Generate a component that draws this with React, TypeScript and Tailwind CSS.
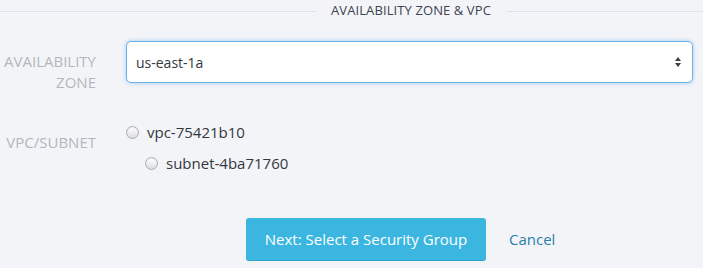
import React from "react";

function Radio({ label }: { label: string }) {
  return (
    <label className="flex items-center gap-2 cursor-pointer">
      <span className="w-[13px] h-[13px] rounded-full border border-[#a9abae] bg-gradient-to-b from-[#ffffff] to-[#dcdde0] shadow-[inset_0_1px_1px_rgba(0,0,0,0.05)]" />
      <span className="text-[15px] leading-[20px] text-[#333840]">{label}</span>
    </label>
  );
}

export default function App() {
  return (
    <div className="w-[703px] h-[268px] bg-[#f3f4f8] font-['Open_Sans',sans-serif] overflow-hidden">
      <div className="flex items-center h-[22px]">
        <div className="w-[316px] h-px bg-[#dfe1ea]" />
        <span className="ml-[15px] mr-[16px] text-[13px] tracking-[0.1px] text-[#3c4450]">AVAILABILITY ZONE &amp; VPC</span>
        <div className="flex-1 h-px bg-[#dfe1ea]" />
      </div>

      <div className="flex mt-[19px]">
        <div className="w-[96px] pt-[10px] text-right text-[15px] leading-[21px] text-[#b3b7bb]">
          AVAILABILITY
          <br />
          ZONE
        </div>
        <div className="ml-[30px] w-[567px] h-[42px] flex items-center justify-between px-[9px] bg-white border border-[#6aafe6] rounded-[5px] shadow-[0_0_4px_rgba(102,175,233,0.6)]">
          <span className="text-[14px] text-[#333840]">us-east-1a</span>
          <svg width="8" height="12" viewBox="0 0 8 12" className="mr-[1px]">
            <path d="M4 1 L7 5 L1 5 Z" fill="#3a3f47" />
            <path d="M4 11 L7 7 L1 7 Z" fill="#3a3f47" />
          </svg>
        </div>
      </div>

      <div className="flex mt-[29px]">
        <div className="w-[96px] pt-[10px] text-right text-[15px] leading-[21px] text-[#b3b7bb]">VPC/SUBNET</div>
        <div className="ml-[30px] flex flex-col">
          <Radio label="vpc-75421b10" />
          <div className="ml-[19px] mt-[11px]">
            <Radio label="subnet-4ba71760" />
          </div>
        </div>
      </div>

      <div className="flex items-center mt-[45px] ml-[246px]">
        <button className="w-[240px] h-[43px] rounded-[3px] bg-[#3bb6e0] border-b border-[#2ea3cc] text-white text-[15px]">
          Next: Select a Security Group
        </button>
        <a className="ml-[23px] text-[15px] text-[#2b7fa8]">Cancel</a>
      </div>
    </div>
  );
}
